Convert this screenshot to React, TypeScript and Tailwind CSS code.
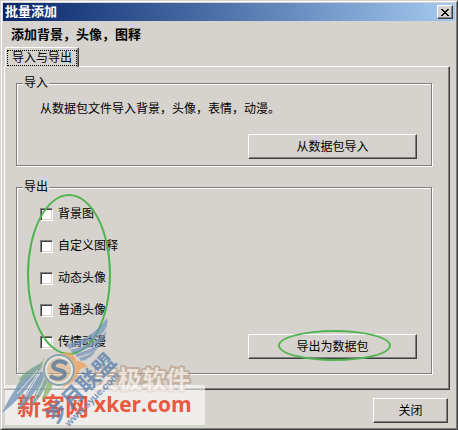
import type { ReactNode } from "react";
import clsx from "clsx";

const exportItems = [
  { id: "background", label: "背景图" },
  { id: "custom-emoticon", label: "自定义图释" },
  { id: "animated-avatar", label: "动态头像" },
  { id: "normal-avatar", label: "普通头像" },
  { id: "flash", label: "传情动漫" },
];

type ButtonProps = {
  className?: string;
  children: ReactNode;
};

function Button({ className, children }: ButtonProps) {
  return (
    <button
      type="button"
      className={clsx(
        "relative h-[25px] border border-t-white border-l-white border-r-[#404040] border-b-[#404040] text-center shadow-[inset_-1px_-1px_0_#808080]",
        className
      )}
    >
      {children}
    </button>
  );
}

type GroupProps = {
  title: string;
  className?: string;
  children: ReactNode;
};

function Group({ title, className, children }: GroupProps) {
  return (
    <fieldset
      className={clsx(
        "min-w-0 border border-[#808080] pr-[14px] pl-[23px] shadow-[1px_1px_0_#fff,inset_1px_1px_0_#fff]",
        className
      )}
    >
      <legend className="-ml-[17px] bg-[#d6d3ce] px-px leading-[12px]">{title}</legend>
      {children}
    </fieldset>
  );
}

function Watermark() {
  return (
    <svg
      className="pointer-events-none absolute -bottom-px -left-px"
      width="210"
      height="120"
      viewBox="0 0 210 120"
      aria-hidden="true"
    >
      <text
        x="94"
        y="78"
        fontFamily="'Noto Sans CJK SC', sans-serif"
        fontWeight="700"
        fontSize="24"
        fill="#eee6df"
        stroke="#bfa998"
        strokeWidth="4"
        strokeLinejoin="round"
        paintOrder="stroke"
        opacity="0.85"
      >
        天极软件
      </text>
      <rect x="5" y="75" width="200" height="40" fill="#fff" opacity="0.6" />
      <g fill="#e8593f">
        <text x="17" y="105" fontSize="24" fontWeight="700" fontFamily="'Noto Sans CJK SC', sans-serif">
          新客网
        </text>
        <text x="94" y="102" fontSize="21" fontWeight="700" fontFamily="'Open Sans', sans-serif">
          xker.com
        </text>
      </g>

      {/* right wing */}
      <g fill="#7492ba" opacity="0.7">
        <path d="M67 34 Q92 29 107 8 Q110 20 96 28 Q82 35 69 39Z" />
        <path d="M70 40 Q94 35 107 21 Q105 32 91 37 Q82 41 73 43Z" />
        <path d="M75 44 Q92 40 102 31 Q99 41 87 44 Q82 46 77 47Z" />
        <path d="M79 48 Q89 45 96 40 Q92 49 81 51Z" />
      </g>
      {/* left wing */}
      <g opacity="0.75">
        <path d="M45 43 Q44 52 36 56 Q26 60 18 70 Q30 68 42 57Z" fill="#8bb36b" />
        <path d="M42 53 Q20 61 12 88 Q28 76 41 59Z" fill="#6f9d93" />
        <path d="M30 66 Q15 74 2 103 Q20 90 35 67Z" fill="#6e91b6" />
        <path d="M41 61 Q29 75 17 101 Q34 88 44 65Z" fill="#6e91b6" />
        <path d="M44 65 Q36 78 31 97 Q43 86 48 70Z" fill="#6f9d93" />
        <path d="M48 71 Q44 80 42 91 Q50 84 53 74Z" fill="#8bb36b" />
        <path d="M38 60 L17 84 M40 63 L25 87 M45 67 L35 88" stroke="#e5e7e7" strokeWidth="1" fill="none" />
      </g>
      {/* bird body */}
      <path
        d="M60 44 Q74 39 76 51 Q82 50 88 57 Q81 57 79 62 Q76 72 62 78 Q70 69 71 60 Q70 50 60 44Z"
        fill="#eda461"
        opacity="0.8"
      />
      <circle cx="59" cy="60" r="14" fill="#e6b98a" fillOpacity="0.55" stroke="#e5e6e2" strokeWidth="4" />
      <circle cx="59" cy="60" r="15" fill="none" stroke="#8ba1a8" strokeWidth="2" />
      <path
        d="M67 54 Q60 49 55 53 Q50 58 59 60 Q68 62 63 67 Q58 71 50 66"
        fill="none"
        stroke="#71889f"
        strokeWidth="4"
      />

      <g fill="#5d83b0" fontWeight="700" opacity="0.8">
        <text
          x="55"
          y="115"
          fontSize="22"
          fontFamily="'Noto Sans CJK SC', sans-serif"
          transform="rotate(-45 55 115)"
        >
          岁月联盟
        </text>
        <text
          x="69"
          y="117"
          fontSize="10"
          fontFamily="'Liberation Sans', Arial, sans-serif"
          transform="rotate(-45 69 117)"
        >
          www.syue.com
        </text>
      </g>
    </svg>
  );
}

export default function App() {
  return (
    <div className="relative w-full border border-t-[#d6d3ce] border-r-[#404040] border-b-[#404040] border-l-[#d6d3ce] bg-[#d6d3ce] p-0.5 font-['Liberation_Sans','Noto_Sans_CJK_SC',sans-serif] text-[12px] leading-[16px] text-black shadow-[inset_1px_1px_0_#fff,inset_-1px_-1px_0_#808080]">
      <header className="flex h-[18px] items-center justify-between bg-linear-to-r from-[#0a246a] to-[#a6caf0] pr-0.5 pl-0.5">
        <h1 className="text-[13px] leading-[18px] font-bold text-white">批量添加</h1>
        <button
          type="button"
          aria-label="关闭窗口"
          className="flex h-[14px] w-4 items-center justify-center border border-t-white border-l-white border-r-[#404040] border-b-[#404040] bg-[#d6d3ce] shadow-[inset_-1px_-1px_0_#808080]"
        >
          <svg width="8" height="7" viewBox="0 0 8 7" shapeRendering="crispEdges" aria-hidden="true">
            <path
              d="M0 0h2v1h1v1h2V1h1V0h2v1H7v1H6v1H5v1h1v1h1v1h1v1H6V6H5V5H3v1H2v1H0V6h1V5h1V4h1V3H2V2H1V1H0z"
              fill="#000"
            />
          </svg>
        </button>
      </header>

      <h2 className="mt-[7px] pl-2 text-[13px] leading-[14px] font-bold">添加背景，头像，图释</h2>

      <div role="tablist" className="relative mt-[5px] -mb-px flex pl-0.5">
        <button
          type="button"
          role="tab"
          aria-selected="true"
          className="h-5 rounded-t-[2px] border border-b-0 border-t-white border-l-white border-r-[#404040] bg-[#d6d3ce] px-px pt-px shadow-[inset_-1px_0_0_#808080]"
        >
          <span className="block border border-dotted border-black px-1 leading-[14px]">
            导入与导出
          </span>
        </button>
      </div>

      <div
        role="tabpanel"
        className="mr-[5px] ml-px flex flex-col gap-[15px] border border-t-white border-l-white border-r-[#404040] border-b-[#404040] pt-[10px] pr-[17px] pb-[15px] pl-[11px] shadow-[inset_-1px_-1px_0_#808080]"
      >
        <Group title="导入" className="pb-1.5">
          <p className="pt-3">从数据包文件导入背景，头像，表情，动漫。</p>
          <div className="mt-[17px] flex justify-end">
            <Button className="w-[169px]">从数据包导入</Button>
          </div>
        </Group>

        <Group title="导出" className="pb-[14px]">
          <div className="flex items-end justify-between pt-[13px]">
            <ul className="relative flex flex-col gap-4 pb-[9px]">
              {exportItems.map((item) => (
                <li key={item.id} className="flex items-center gap-[5px]">
                  <input
                    id={item.id}
                    type="checkbox"
                    className="size-[13px] appearance-none border border-t-[#808080] border-r-white border-b-white border-l-[#808080] bg-white shadow-[inset_1px_1px_0_#404040,inset_-1px_-1px_0_#d6d3ce]"
                  />
                  <label htmlFor={item.id}>{item.label}</label>
                </li>
              ))}
              <li
                aria-hidden="true"
                className="pointer-events-none absolute -top-3 -left-[13px] h-[161px] w-[84px] rounded-[50%] border-2 border-[#50b450]"
              />
            </ul>
            <Button className="w-[169px]">
              导出为数据包
              <span className="pointer-events-none absolute -top-[5px] left-[29px] h-[31px] w-[113px] rounded-[50%] border-2 border-[#50b450]" />
            </Button>
          </div>
        </Group>
      </div>

      <footer className="mt-2 mr-[7px] flex justify-end pb-1">
        <Button className="w-[75px]">关闭</Button>
      </footer>

      <Watermark />
    </div>
  );
}
